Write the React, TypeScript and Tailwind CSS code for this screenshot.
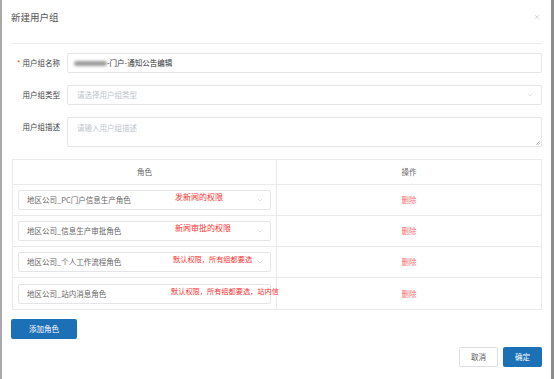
import React from 'react';
import { ChevronDown, X } from 'lucide-react';

interface RoleRow {
  name: string;
  note: string;
  chevron: boolean;
}

const roles: RoleRow[] = [
  { name: '地区公司_PC门户信息生产角色', note: '发新闻的权限', chevron: true },
  { name: '地区公司_信息生产审批角色', note: '新闻审批的权限', chevron: true },
  { name: '地区公司_个人工作流程角色', note: '默认权限，所有组都要选', chevron: true },
  { name: '地区公司_站内消息角色', note: '默认权限，所有组都要选，站内信', chevron: false },
];

const FormRow: React.FC<{ label: string; required?: boolean; top?: boolean; children: React.ReactNode }> = ({
  label,
  required,
  top,
  children,
}) => (
  <div className={`flex ${top ? 'items-start' : 'items-center'}`}>
    <label
      className={`w-[49px] mr-[7px] shrink-0 text-right text-[7.5px] leading-[10px] text-[#444] whitespace-nowrap ${
        top ? 'pt-[5px]' : ''
      }`}
    >
      {required && <span className="text-[#ed4014] mr-[2px]">*</span>}
      {label}
    </label>
    {children}
  </div>
);

export default function App() {
  return (
    <div className="w-[554px] h-[379px] bg-white border-l-2 border-l-[#a9a9a9] border-r-[3px] border-r-[#8c8c8c] px-[9px] flex flex-col font-['Noto_Sans_CJK_SC',sans-serif]">
      {/* header */}
      <div className="h-[44px] shrink-0 flex items-start justify-between pt-[10px] border-b border-[#ebebeb]">
        <h1 className="text-[9.5px] leading-[14px] text-[#555]">新建用户组</h1>
        <X size={8} strokeWidth={1.5} className="text-[#b0b8c0] mt-[3px] mr-[1px]" />
      </div>

      {/* form */}
      <div className="flex flex-col gap-[12px] pt-[9px]">
        <FormRow label="用户组名称" required>
          <div className="flex-1 h-[20px] border border-[#e3e5e8] rounded-[2px] flex items-center pl-[6px] text-[7.5px] text-[#333]">
            <span className="inline-block w-[33px] h-[5px] bg-[#9a9a9a] rounded-full blur-[1.5px]" />
            <span>-门户-通知公告编辑</span>
          </div>
        </FormRow>
        <FormRow label="用户组类型">
          <div className="flex-1 h-[20px] border border-[#e3e5e8] rounded-[2px] flex items-center justify-between pl-[9px] pr-[7px] text-[7.5px] text-[#c0c4cc]">
            <span>请选择用户组类型</span>
            <ChevronDown size={8} strokeWidth={1.5} className="text-[#c0c4cc]" />
          </div>
        </FormRow>
        <FormRow label="用户组描述" top>
          <div className="relative flex-1 h-[30px] border border-[#e3e5e8] rounded-[2px] pl-[9px] pt-[4px] text-[7.5px] text-[#c0c4cc]">
            <span>请输入用户组描述</span>
            <svg className="absolute right-[1px] bottom-[1px]" width="5" height="5" viewBox="0 0 5 5">
              <path d="M5 1L1 5M5 3L3 5" stroke="#999" strokeWidth="0.6" />
            </svg>
          </div>
        </FormRow>
      </div>

      {/* roles table */}
      <div className="mt-[12px] ml-[1px] border border-[#e8eaec] text-[7.5px]">
        <div className="flex h-[25px] border-b border-[#e8eaec] text-[#666]">
          <div className="w-[264px] flex items-center justify-center border-r border-[#e8eaec]">角色</div>
          <div className="flex-1 flex items-center justify-center">操作</div>
        </div>
        {roles.map((r, i) => (
          <div key={i} className={`flex h-[31px] ${i < roles.length - 1 ? 'border-b border-[#e8eaec]' : ''}`}>
            <div className="w-[264px] border-r border-[#e8eaec] flex items-center px-[5px]">
              <div className="relative w-full h-[20px] border border-[#e3e5e8] rounded-[2px] flex items-center justify-between pl-[8px] pr-[6px] text-[#666]">
                <span>{r.name}</span>
                {r.chevron && <ChevronDown size={8} strokeWidth={1.5} className="relative z-10 text-[#c0c4cc]" />}
                <span
                  className={`absolute top-[1px] leading-[10px] text-[#ff3333] whitespace-nowrap ${
                    i < 2 ? 'left-[156px] text-[8px]' : i === 2 ? 'left-[154px] text-[7.2px]' : 'left-[152px] text-[7.2px]'
                  }`}
                >
                  {r.note}
                </span>
              </div>
            </div>
            <div className="flex-1 flex items-center justify-center text-[#f56c6c]">删除</div>
          </div>
        ))}
      </div>

      {/* add role */}
      <div className="mt-[9px] flex">
        <button className="w-[66px] h-[20px] rounded-[2px] bg-[#1c70b6] text-white text-[7.5px]">添加角色</button>
      </div>

      {/* footer */}
      <div className="mt-[8px] flex justify-end gap-[5px]">
        <button className="w-[39px] h-[20px] rounded-[2px] border border-[#dcdee2] bg-white text-[#555] text-[7.5px]">取消</button>
        <button className="w-[39px] h-[20px] rounded-[2px] bg-[#1c70b6] text-white text-[7.5px]">确定</button>
      </div>
    </div>
  );
}
